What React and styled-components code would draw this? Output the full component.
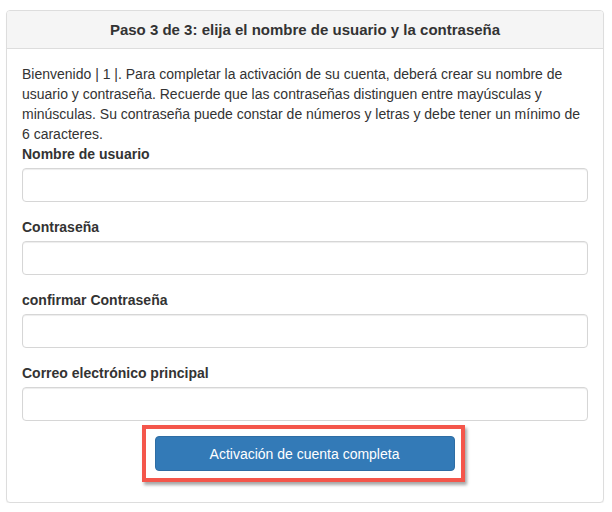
import React from "react";
import styled, { createGlobalStyle } from "styled-components";

const GlobalStyle = createGlobalStyle`
	* {
		box-sizing: border-box;
	}
	body {
		margin: 0;
		background: #ffffff;
		font-family: "Liberation Sans", Arial, sans-serif;
		font-size: 14px;
		line-height: 20px;
		color: #333333;
	}
`;

const Page = styled.div`
	padding: 10px 8px 0 6px;
`;

const Panel = styled.div`
	border: 1px solid #dddddd;
	border-radius: 4px;
	background: #ffffff;
	box-shadow: 0 1px 1px rgba(0, 0, 0, 0.05);
`;

const PanelHeading = styled.div`
	background: #f5f5f5;
	border-bottom: 1px solid #dddddd;
	border-radius: 3px 3px 0 0;
	padding: 10px 15px;
	text-align: center;
`;

const PanelTitle = styled.h3`
	margin: 0;
	font-size: 15px;
	line-height: 17px;
	font-weight: bold;
	color: #333333;
`;

const PanelBody = styled.div`
	padding: 15px 15px 20px;
`;

const Intro = styled.p`
	margin: 0;
`;

const FormGroup = styled.div`
	margin-bottom: ${(p) => (p.$last ? "4px" : "15px")};
`;

const Label = styled.label`
	display: block;
	font-weight: bold;
	margin-bottom: 4px;
`;

const Input = styled.input`
	display: block;
	width: 100%;
	height: 34px;
	padding: 6px 12px;
	font-family: inherit;
	font-size: 14px;
	color: #555555;
	border: 1px solid #d6d6d6;
	border-radius: 4px;
	background: #ffffff;
	box-shadow: inset 0 1px 1px rgba(0, 0, 0, 0.075);
	outline: none;
`;

const Actions = styled.div`
	display: flex;
	justify-content: center;
`;

// red annotation frame drawn round the submit button
const Highlight = styled.div`
	border: 4px solid #f4564b;
	padding: 7px 6px 7px 9px;
	box-shadow: 2px 3px 3px rgba(0, 0, 0, 0.35);
	margin-left: -4px;
`;

const SubmitButton = styled.button`
	display: block;
	width: 300px;
	height: 35px;
	padding: 0 12px;
	font-family: inherit;
	font-size: 14px;
	color: #ffffff;
	background: #337ab7;
	border: 1px solid #2e6da4;
	border-radius: 4px;
	cursor: pointer;
`;

const fields = [
	{ id: "username", label: "Nombre de usuario", type: "text" },
	{ id: "password", label: "Contraseña", type: "password" },
	{ id: "confirm", label: "confirmar Contraseña", type: "password" },
	{ id: "email", label: "Correo electrónico principal", type: "email" },
];

const App = () => {
	return (
		<Page>
			<GlobalStyle />
			<Panel>
				<PanelHeading>
					<PanelTitle>Paso 3 de 3: elija el nombre de usuario y la contraseña</PanelTitle>
				</PanelHeading>
				<PanelBody>
					<Intro>
						Bienvenido | 1 |. Para completar la activación de su cuenta, deberá crear su nombre de
						usuario y contraseña. Recuerde que las contraseñas distinguen entre mayúsculas y
						minúsculas. Su contraseña puede constar de números y letras y debe tener un mínimo de
						6 caracteres.
					</Intro>
					{fields.map((f, i) => (
						<FormGroup key={f.id} $last={i === fields.length - 1}>
							<Label htmlFor={f.id}>{f.label}</Label>
							<Input id={f.id} type={f.type} />
						</FormGroup>
					))}
					<Actions>
						<Highlight>
							<SubmitButton type="submit">Activación de cuenta completa</SubmitButton>
						</Highlight>
					</Actions>
				</PanelBody>
			</Panel>
		</Page>
	);
};

export default App;
